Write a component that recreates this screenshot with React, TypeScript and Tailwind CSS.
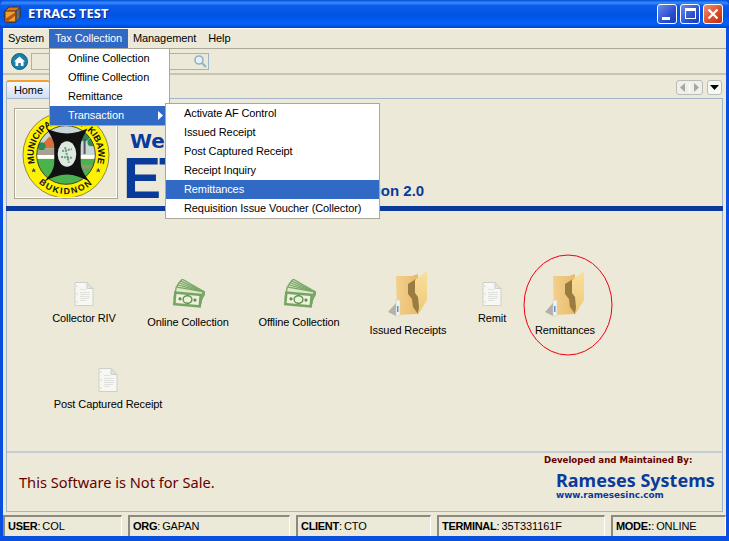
function AppIcon() {
  return (
    <svg width="17" height="17" viewBox="0 0 17 17" className="shrink-0">
      <path d="M1 5 L5 1 H16 V12 L12 16 H1 Z" fill="#d9741a" stroke="#4a3018" />
      <path d="M1 5 H12 V16 H1 Z" fill="#f0a030" stroke="#4a3018" />
      <path d="M1 13 L12 6 V9 L3 16 H1 Z" fill="#b85510" />
      <path d="M12 5 L16 1 V12 L12 16 Z" fill="#6a6a70" stroke="#3a3a3a" />
    </svg>
  );
}

function HomeIcon() {
  return (
    <svg width="17" height="17" viewBox="0 0 17 17">
      <circle cx="8.5" cy="8.5" r="8" fill="#1d7fa6" stroke="#0f5f80" />
      <path d="M8.5 3.5 L14 8.5 H12.5 V13 H9.8 V10 H7.2 V13 H4.5 V8.5 H3 Z" fill="#fff" />
    </svg>
  );
}

function DocIcon() {
  return (
    <svg width="20" height="24" viewBox="0 0 20 24">
      <path d="M1 .5 H13 L19 6.5 V23.5 H1 Z" fill="#f7f7f4" stroke="#cfcfca" />
      <path d="M13 .5 V6.5 H19 Z" fill="#e2e2de" stroke="#cfcfca" />
      <path d="M6 7.5 H12 M6 10.5 H16 M6 12.5 H16 M6 14.5 H16 M6 16.5 H15 M6 18.5 H12" stroke="#e0e0dc" />
      <path d="M2.5 4 H3.5 M2.5 12 H3.5 M2.5 20 H3.5" stroke="#b5b5b0" />
    </svg>
  );
}

function MoneyIcon() {
  return (
    <svg width="33" height="30" viewBox="0 0 33 30">
      <g transform="translate(-1.5 -1.5)">
        {[30, 25, 20, 15, 10].map((a) => (
          <rect key={a} x="4" y="14" width="27" height="12" fill="#dfe8cb" stroke="#7aa868" strokeWidth="1.3" transform={`rotate(${a} 31 22)`} />
        ))}
        <g transform="rotate(5 17 22)">
          <rect x="3" y="15" width="28" height="14" fill="#76a463" />
          <rect x="5.5" y="17.5" width="23" height="9" fill="#eef2dc" />
          <ellipse cx="17" cy="22" rx="4.4" ry="3.8" fill="#eef2dc" stroke="#5f9150" strokeWidth="1.4" />
          <circle cx="9.5" cy="22" r="1.6" fill="#5f9150" />
          <circle cx="24.5" cy="22" r="1.6" fill="#5f9150" />
        </g>
      </g>
    </svg>
  );
}

function FolderIcon() {
  return (
    <svg width="40" height="46" viewBox="0 0 40 46">
      <defs>
        <linearGradient id="fb" x1="0" y1="0" x2="1" y2="0">
          <stop offset="0" stopColor="#f3d08c" />
          <stop offset="1" stopColor="#e8bb6c" />
        </linearGradient>
        <linearGradient id="fl" x1="0" y1="0" x2="0" y2="1">
          <stop offset="0" stopColor="#f9e09c" />
          <stop offset="1" stopColor="#eec878" />
        </linearGradient>
      </defs>
      <path d="M0 41 L8 32 V45 Z" fill="#8f8d85" opacity="0.6" />
      <path d="M8 5 H24 L30 3 V43 L9 44 Z" fill="url(#fb)" />
      <path d="M8 29 H12 V45 H8 Z" fill="#f2f2ee" stroke="#cfc9b4" strokeWidth="0.5" />
      <path d="M9 35 H10.5 V41 H9 Z" fill="#5c93d6" />
      <path d="M20 13 L28 8 V22 L31 26 L32 36 L30 43 L25 36 L24 28 L20 23 Z" fill="#9a7c40" />
      <path d="M27 9 L39 0 V29 L30 44 L31 36 L30 26 L27 22 Z" fill="url(#fl)" />
    </svg>
  );
}

function SealLogo() {
  return (
    <svg width="88" height="88" viewBox="0 0 90 90" className="mt-[3px]">
      <defs>
        <path id="sealTop" d="M15.1 59 A33 33 0 1 1 74.9 59" />
        <path id="sealBottom" d="M10.4 65 A40 40 0 0 0 79.6 65" />
        <clipPath id="sealInner"><circle cx="45" cy="45" r="30" /></clipPath>
      </defs>
      <circle cx="45" cy="45" r="44" fill="#fff200" stroke="#222" strokeWidth="0.5" />
      <g clipPath="url(#sealInner)">
        <rect x="10" y="10" width="70" height="36" fill="#c9d6d8" />
        <path d="M17 38 L28 26 L42 34 V38 Z" fill="#d9703a" />
        <path d="M15 38 H40 V46 H15 Z" fill="#a8a090" />
        <circle cx="64" cy="26" r="5" fill="#2f8a58" />
        <circle cx="71" cy="32" r="4" fill="#2f8a58" />
        <rect x="63" y="28" width="2" height="16" fill="#555" />
        <circle cx="20" cy="36" r="4" fill="#2f8a58" />
        <rect x="10" y="45" width="70" height="4" fill="#fff" />
        <rect x="10" y="49" width="70" height="30" fill="#4cb14f" />
        <path d="M58 55 H72 V59 H58 Z" fill="#8a9a6a" />
      </g>
      <circle cx="45" cy="45" r="30" fill="none" stroke="#222" strokeWidth="0.8" />
      <path d="M25 18 C32 21 38 23 46 23 C54 23 60 21 67 18 C63 26 60 30 60 37 V52 C60 60 65 67 69 72 C60 68 54 65 46 65 C38 65 31 68 23 72 C29 65 33 60 33 52 V37 C33 30 29 25 25 18 Z" fill="#111" />
      <ellipse cx="46" cy="44" rx="9.5" ry="13" fill="#dfe8e0" />
      <path d="M41 41 L51 39 M40 47 L52 48 M44 37 L48 53" stroke="#6a9a80" strokeWidth="2" strokeDasharray="2 1" />
      <text fontSize="9.5" fontWeight="700" fill="#111" letterSpacing="-0.1" className="font-['Liberation_Sans',sans-serif]">
        <textPath href="#sealTop" startOffset="50%" textAnchor="middle">MUNICIPALITY OF KIBAWE</textPath>
      </text>
      <text fontSize="9" fontWeight="700" fill="#111" letterSpacing="1.6" className="font-['Liberation_Sans',sans-serif]">
        <textPath href="#sealBottom" startOffset="50%" textAnchor="middle">BUKIDNON</textPath>
      </text>
      <path d="M10 63 L12 58 L14 63 L9.5 60 H14.5 Z M76 63 L78 58 L80 63 L75.5 60 H80.5 Z" fill="#27407a" />
    </svg>
  );
}

const status = [
  { label: 'USER', value: 'COL', w: 'w-[119px]' },
  { label: 'ORG', value: 'GAPAN', w: 'w-[162px]' },
  { label: 'CLIENT', value: 'CTO', w: 'w-[135px]' },
  { label: 'TERMINAL', value: '35T331161F', w: 'w-[168px]' },
  { label: 'MODE:', value: 'ONLINE', w: 'flex-1' },
];

function Shortcut({ label, icon, w, mt, gap }: { label: string; icon: React.ReactNode; w: string; mt: string; gap: string }) {
  return (
    <div className={`flex flex-col items-center ${w} ${mt}`}>
      {icon}
      <div className={`whitespace-nowrap leading-[14px] ${gap}`}>{label}</div>
    </div>
  );
}

export default function App() {
  return (
    <div className="relative w-[729px] h-[541px] overflow-hidden flex flex-col bg-[#0a50e0] text-[11px] tracking-[-0.1px] text-black font-['Liberation_Sans',sans-serif]">
      {/* title bar */}
      <div className="h-[28px] shrink-0 flex items-center pl-[4px] pr-[6px] rounded-t-md bg-[linear-gradient(180deg,#0050e0_0%,#3a8cf8_10%,#0a5ceb_20%,#0054e4_55%,#0062fa_85%,#0040c8_100%)]">
        <AppIcon />
        <span className="ml-[7px] text-[13px] font-bold text-white tracking-normal [text-shadow:1px_1px_#0a2a80] font-['Noto_Sans',sans-serif]">ETRACS TEST</span>
        <div className="ml-auto flex gap-[3px] -mt-[1px]">
          <div className="relative w-[20px] h-[20px] rounded-[3px] border border-white bg-[linear-gradient(135deg,#6a8cf0,#2a50d0_60%,#1a3ab8)]">
            <div className="absolute left-[4px] bottom-[3px] w-[8px] h-[3px] bg-white" />
          </div>
          <div className="relative w-[20px] h-[20px] rounded-[3px] border border-white bg-[linear-gradient(135deg,#6a8cf0,#2a50d0_60%,#1a3ab8)]">
            <div className="absolute left-[4px] top-[3px] w-[11px] h-[11px] border border-white border-t-[3px]" />
          </div>
          <div className="flex items-center justify-center w-[20px] h-[20px] rounded-[3px] border border-white bg-[linear-gradient(135deg,#f09070,#d84a28_60%,#b83010)]">
            <svg width="12" height="12" viewBox="0 0 12 12"><path d="M1.5 1.5 L10.5 10.5 M10.5 1.5 L1.5 10.5" stroke="#fff" strokeWidth="2.2" /></svg>
          </div>
        </div>
      </div>

      {/* window body */}
      <div className="flex-1 min-h-0 ml-[3px] mr-[3px] mb-[5px] flex flex-col bg-[#ece9d8]">
        {/* menu bar */}
        <div className="h-[21px] shrink-0 flex items-center border-t border-t-white border-b border-b-[#aca899]">
          <span className="ml-[5px] w-[41px]">System</span>
          <span className="h-full w-[79px] flex items-center justify-center bg-[#316ac5] text-white">Tax Collection</span>
          <span className="ml-[5px]">Management</span>
          <span className="ml-[12px]">Help</span>
        </div>

        {/* toolbar */}
        <div className="h-[26px] shrink-0 flex items-center pl-[8px] border-b-2 border-b-[#c8c4b0]">
          <HomeIcon />
          <div className="ml-[3px] w-[178px] h-[17px] flex items-center justify-end pr-[1px] border border-[#9db4c8] bg-[#ece9d8]">
            <svg width="14" height="14" viewBox="0 0 14 14" fill="none">
              <circle cx="6" cy="6" r="4" stroke="#8fb0cc" strokeWidth="1.6" fill="#e8f0f6" />
              <path d="M9 9 L13 13" stroke="#8fb0cc" strokeWidth="2" />
            </svg>
          </div>
        </div>

        {/* tab strip */}
        <div className="h-[23px] shrink-0 flex items-end pl-[3px] pr-[4px]">
          <div className="w-[44px] h-[18px] flex items-center pl-[7px] rounded-t-[3px] border-t-2 border-t-[#f0a030] border-x border-x-[#a3b5c8] bg-[linear-gradient(180deg,#f8f9fd,#d4ddf4)]">Home</div>
          <div className="ml-auto flex gap-[4px] self-start mt-[5px]">
            <div className="flex items-center justify-center w-[27px] h-[15px] rounded-[3px] border border-[#b8bdb8] bg-[#f0efe8]">
              <svg width="21" height="9" viewBox="0 0 21 9">
                <path d="M1 4.5 L6 0 V9 Z M20 4.5 L15 0 V9 Z" fill="#a8a89f" />
                <path d="M10.5 0 V9" stroke="#fff" />
              </svg>
            </div>
            <div className="flex items-center justify-center w-[15px] h-[15px] rounded-[3px] border border-[#b8bdb8] bg-[#f8f8f4]">
              <svg width="9" height="5" viewBox="0 0 9 5"><path d="M0 0 H9 L4.5 5 Z" fill="#000" /></svg>
            </div>
          </div>
        </div>

        {/* tab panel */}
        <div className="flex-1 min-h-0 ml-[3px] mr-[3px] flex flex-col border border-[#a3b5c8]">
          {/* welcome header */}
          <div className="h-[107px] shrink-0 flex pl-[7px] pt-[9px] overflow-hidden">
            <div className="w-[104px] h-[91px] shrink-0 flex items-center justify-center border border-[#aca899] outline outline-white -outline-offset-2">
              <SealLogo />
            </div>
            <div className="relative ml-[9px] w-[320px] font-bold tracking-normal text-[#0a3a9a]">
              <div className="ml-[3px] text-[20px] leading-[24px] mt-[21px] whitespace-nowrap font-['DejaVu_Sans',sans-serif]">Welcome to</div>
              <div className="text-[57px] leading-[50px] tracking-[-2px] -ml-[4px] whitespace-nowrap">ETRACS</div>
              <span className="absolute left-[218px] top-[74px] text-[15px] leading-[18px] whitespace-nowrap">Version 2.0</span>
            </div>
          </div>
          <div className="h-[5px] shrink-0 -ml-[1px] -mr-[1px] bg-[#0a3a9a]" />

          {/* shortcuts */}
          <div className="flex-1 min-h-0 pt-[60px] pl-[27px] flex flex-col">
            <div className="flex items-start h-[97px]">
              <Shortcut label="Collector RIV" icon={<DocIcon />} w="w-[100px]" mt="mt-[11px]" gap="mt-[5px]" />
              <Shortcut label="Online Collection" icon={<MoneyIcon />} w="w-[108px]" mt="mt-[8px]" gap="mt-[6px]" />
              <Shortcut label="Offline Collection" icon={<MoneyIcon />} w="w-[114px]" mt="mt-[8px]" gap="mt-[6px]" />
              <Shortcut label="Issued Receipts" icon={<FolderIcon />} w="w-[104px]" mt="mt-0" gap="mt-[6px]" />
              <Shortcut label="Remit" icon={<DocIcon />} w="w-[64px]" mt="mt-[11px]" gap="mt-[5px]" />
              <Shortcut label="Remittances" icon={<FolderIcon />} w="w-[82px]" mt="mt-0" gap="mt-[6px]" />
            </div>
            <Shortcut label="Post Captured Receipt" icon={<DocIcon />} w="w-[108px] ml-[20px]" mt="mt-0" gap="mt-[5px]" />
          </div>

          {/* footer */}
          <div className="h-[60px] shrink-0 flex justify-between border-t-2 border-t-[#c4ccd4] pl-[12px] pr-[6px] tracking-normal">
            <div className="pt-[19px] text-[14.6px] leading-[20px] text-[#660000] font-['Noto_Sans',sans-serif]">This Software is Not for Sale.</div>
            <div className="flex flex-col pt-[1px] w-[172px] font-['DejaVu_Sans',sans-serif] font-bold">
              <div className="text-[8.6px] leading-[13px] text-[#660000] whitespace-nowrap">Developed and Maintained By:</div>
              <div className="mt-[3px] pl-[12px] text-[18px] leading-[20px] text-[#0a3a9a] whitespace-nowrap font-['Noto_Sans',sans-serif]">Rameses Systems</div>
              <div className="-mt-[1px] pl-[12px] text-[8.85px] leading-[12px] text-[#0a3a9a] whitespace-nowrap">www.ramesesinc.com</div>
            </div>
          </div>
        </div>

        {/* status bar */}
        <div className="h-[24px] shrink-0 flex gap-[6px] pt-[3px]">
          {status.map((s) => (
            <div key={s.label} className={`${s.w} h-[21px] flex items-center gap-[2px] pl-[3px] border-t-2 border-l-2 border-t-[#8a8a80] border-l-[#8a8a80] border-r border-r-white whitespace-nowrap`}>
              <span><b className="tracking-[-0.3px]">{s.label}</b>:</span> <span>{s.value}</span>
            </div>
          ))}
        </div>
      </div>

      {/* open menus */}
      <div className="absolute left-[49px] top-[48px] w-[121px] bg-white border border-[#aca899]">
        <div className="h-[19px] flex items-center pl-[18px]">Online Collection</div>
        <div className="h-[19px] flex items-center pl-[18px]">Offline Collection</div>
        <div className="h-[19px] flex items-center pl-[18px]">Remittance</div>
        <div className="h-[19px] flex items-center pl-[18px] bg-[#316ac5] text-white">
          Transaction
          <svg width="5" height="9" viewBox="0 0 5 9" className="ml-auto mr-[6px]"><path d="M0 0 L5 4.5 L0 9 Z" fill="#fff" /></svg>
        </div>
      </div>
      <div className="absolute left-[165px] top-[103px] w-[215px] bg-white border border-[#aca899]">
        <div className="h-[19px] flex items-center pl-[18px]">Activate AF Control</div>
        <div className="h-[19px] flex items-center pl-[18px]">Issued Receipt</div>
        <div className="h-[19px] flex items-center pl-[18px]">Post Captured Receipt</div>
        <div className="h-[19px] flex items-center pl-[18px]">Receipt Inquiry</div>
        <div className="h-[19px] flex items-center pl-[18px] bg-[#316ac5] text-white">Remittances</div>
        <div className="h-[19px] flex items-center pl-[18px]">Requisition Issue Voucher (Collector)</div>
      </div>

      {/* hand-drawn red circle */}
      <svg width="92" height="104" viewBox="0 0 92 104" className="absolute left-[522px] top-[253px]">
        <ellipse cx="46" cy="52" rx="44" ry="50" fill="none" stroke="#f00010" strokeWidth="1" />
      </svg>
    </div>
  );
}
